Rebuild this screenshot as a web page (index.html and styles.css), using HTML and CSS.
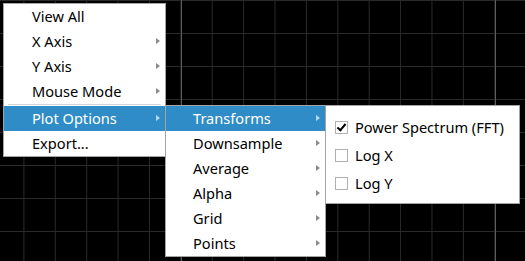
FILE: index.html
```html
<!DOCTYPE html>
<html lang="en">
<head>
    <meta charset="UTF-8">
    <title>Plot context menu</title>
    <link rel="stylesheet" href="styles.css">
</head>
<body>
    <div class="plot">
        <!-- main context menu -->
        <ul class="menu menu-main">
            <li class="item">View All</li>
            <li class="item sub">X Axis</li>
            <li class="item sub">Y Axis</li>
            <li class="item sub">Mouse Mode</li>
            <li class="separator"></li>
            <li class="item sub active">Plot Options</li>
            <li class="item">Export...</li>
        </ul>
        <!-- Plot Options submenu -->
        <ul class="menu menu-options">
            <li class="item sub active">Transforms</li>
            <li class="item sub">Downsample</li>
            <li class="item sub">Average</li>
            <li class="item sub">Alpha</li>
            <li class="item sub">Grid</li>
            <li class="item sub">Points</li>
        </ul>
        <!-- Transforms submenu -->
        <ul class="menu menu-transforms">
            <li class="check-item"><span class="box checked"></span>Power Spectrum (FFT)</li>
            <li class="check-item"><span class="box"></span>Log X</li>
            <li class="check-item"><span class="box"></span>Log Y</li>
        </ul>
    </div>
</body>
</html>
```

FILE: styles.css
```css
body {
    margin: 0;
    font-family: "Noto Sans", "DejaVu Sans", sans-serif;
    font-size: 14.6px;
    color: #000;
}
.plot {
    position: relative;
    width: 525px;
    height: 261px;
    overflow: hidden;
    background-color: #000;
    background-image:
        linear-gradient(to right, #5c5c5c 1px, transparent 1px),
        linear-gradient(to right, #2a2a2a 1px, transparent 1px),
        linear-gradient(to bottom, #2a2a2a 1px, transparent 1px);
    background-size: 314px 100%, 31.4px 100%, 100% 33px;
    background-position: 181px 0, 23.4px 0, 0 0;
}
.menu {
    position: absolute;
    margin: 0;
    padding: 0;
    list-style: none;
    background-color: #fff;
    border: 1px solid #a4a4a4;
}
.menu-main {
    left: 3px;
    top: 3px;
    width: 161px;
}
.menu-options {
    left: 165px;
    top: 105px;
    width: 159px;
}
.menu-transforms {
    left: 325px;
    top: 105px;
    width: 193px;
    padding: 7px 0 6px;
}
.item {
    position: relative;
    height: 25px;
    line-height: 25px;
    padding-left: 28px;
    white-space: nowrap;
}
.menu-options .item {
    padding-left: 27px;
}
.item.sub::after {
    content: "";
    position: absolute;
    right: 5px;
    top: 9px;
    border-left: 4px solid #8a8a8a;
    border-top: 3.5px solid transparent;
    border-bottom: 3.5px solid transparent;
}
.item.active {
    background-color: #308cc6;
    color: #fff;
}
.item.active.sub::after {
    border-left-color: #b4d6ee;
}
.separator {
    height: 1px;
    margin: 0 4px 1px;
    background-color: #d4d4d4;
}
.check-item {
    display: flex;
    align-items: center;
    height: 28px;
    padding-left: 9px;
    white-space: nowrap;
}
.box {
    position: relative;
    box-sizing: border-box;
    width: 13px;
    height: 13px;
    margin-right: 7px;
    border: 1px solid #b0b0b0;
    background-color: #fff;
}
.box.checked::after {
    content: "";
    position: absolute;
    left: 3px;
    top: 0;
    width: 3px;
    height: 7px;
    border-right: 2px solid #000;
    border-bottom: 2px solid #000;
    transform: rotate(40deg);
}
```
